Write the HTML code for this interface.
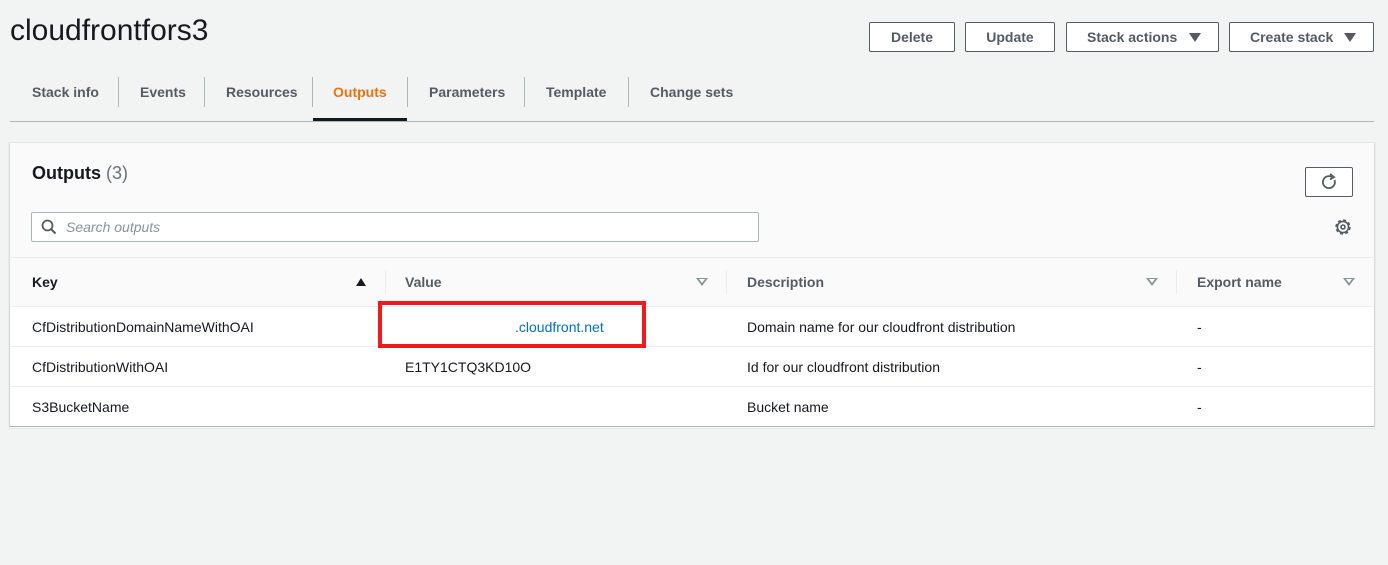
<!DOCTYPE html>
<html><head><style>
*{box-sizing:border-box;margin:0;padding:0}
body{width:1388px;height:565px;background:#f2f3f3;font-family:"Liberation Sans",sans-serif;color:#16191f;position:relative;overflow:hidden;font-size:14px}
.a{position:absolute}
h1{position:absolute;left:10px;top:14px;font-size:30px;font-weight:400;letter-spacing:0px}
.btn{position:absolute;top:22px;height:30px;border:1px solid #545b64;border-radius:2px;background:#fff;font-weight:700;color:#545b64;font-size:14px;line-height:28px;text-align:center}
.tab{position:absolute;top:84px;font-weight:700;color:#545b64;font-size:14px}
.sep{position:absolute;top:77px;width:1px;height:30px;background:#aab7b8}
.th{position:absolute;top:274px;font-weight:700;color:#545b64}
.td{position:absolute;font-size:14px;color:#16191f}
.tri{position:absolute;top:278px;width:0;height:0;border-left:6px solid transparent;border-right:6px solid transparent;border-top:8px solid #879596}
.tri:after{content:"";position:absolute;left:-3px;top:-7px;border-left:3px solid transparent;border-right:3px solid transparent;border-top:4px solid #fff}
.dd{position:absolute;top:10px;border-left:6px solid transparent;border-right:6px solid transparent;border-top:9px solid #545b64}
</style></head><body>
<h1>cloudfrontfors3</h1>
<div class="btn" style="left:869px;width:86px">Delete</div>
<div class="btn" style="left:965px;width:90px">Update</div>
<div class="btn" style="left:1066px;width:153px;text-align:left;padding-left:20px">Stack actions <span class="dd" style="left:122px"></span></div>
<div class="btn" style="left:1229px;width:145px;text-align:left;padding-left:20px">Create stack <span class="dd" style="left:114px"></span></div>

<div class="tab" style="left:32px">Stack info</div>
<div class="sep" style="left:118px"></div>
<div class="tab" style="left:140px">Events</div>
<div class="sep" style="left:204px"></div>
<div class="tab" style="left:226px">Resources</div>
<div class="sep" style="left:312px"></div>
<div class="tab" style="left:333px;color:#ec7211">Outputs</div>
<div class="sep" style="left:407px"></div>
<div class="tab" style="left:429px">Parameters</div>
<div class="sep" style="left:524px"></div>
<div class="tab" style="left:546px">Template</div>
<div class="sep" style="left:628px"></div>
<div class="tab" style="left:650px">Change sets</div>
<div class="a" style="left:10px;top:121px;width:1364px;height:1px;background:#aab7b8"></div>
<div class="a" style="left:313px;top:118px;width:94px;height:3px;background:#16191f"></div>

<div class="a" style="left:10px;top:143px;width:1364px;height:285px;background:#fafafa;box-shadow:1px 0 1px rgba(0,28,36,.15),-1px 0 1px rgba(0,28,36,.15)"></div>
<div class="a" style="left:32px;top:163px;font-size:18px;font-weight:700">Outputs <span style="font-weight:400;color:#687078">(3)</span></div>
<div class="a" style="left:1305px;top:167px;width:48px;height:30px;border:1px solid #545b64;border-radius:2px;background:#fff">
<svg width="46" height="28" viewBox="0 0 46 28"><path d="M28.5 12 A6 6 0 1 1 26 9" fill="none" stroke="#545b64" stroke-width="1.8"/><path d="M24 6 L28 9 L24 11.5" fill="none" stroke="#545b64" stroke-width="1.8"/></svg></div>
<svg class="a" style="left:1334px;top:218px" width="18" height="18" viewBox="0 0 18 18"><circle cx="9" cy="9" r="6.5" fill="none" stroke="#545b64" stroke-width="2.4" stroke-dasharray="2.8 2.3"/><circle cx="9" cy="9" r="5.6" fill="none" stroke="#545b64" stroke-width="1.6"/><circle cx="9" cy="9" r="2" fill="none" stroke="#545b64" stroke-width="1.6"/></svg>
<div class="a" style="left:31px;top:212px;width:728px;height:30px;border:1px solid #aab7b8;border-radius:2px;background:#fff"></div>
<svg class="a" style="left:41px;top:219px" width="16" height="16" viewBox="0 0 16 16"><circle cx="6.5" cy="6.5" r="5" fill="none" stroke="#545b64" stroke-width="1.8"/><path d="M10 10 L14.5 14.5" stroke="#545b64" stroke-width="2"/></svg>
<div class="a" style="left:66px;top:219px;font-style:italic;color:#879596;font-size:14px">Search outputs</div>

<div class="a" style="left:11px;top:257px;width:1362px;height:1px;background:#eaeded"></div>
<div class="a" style="left:11px;top:306px;width:1362px;height:121px;background:#fff"></div>
<div class="a" style="left:11px;top:306px;width:1362px;height:1px;background:#eaeded"></div>
<div class="a" style="left:11px;top:346px;width:1362px;height:1px;background:#eaeded"></div>
<div class="a" style="left:11px;top:386px;width:1362px;height:1px;background:#eaeded"></div>
<div class="a" style="left:10px;top:426px;width:1364px;height:1px;background:#aab7b8"></div>

<div class="th" style="left:32px;color:#16191f">Key</div>
<div class="a" style="left:356px;top:278px;border-left:5px solid transparent;border-right:5px solid transparent;border-bottom:8px solid #16191f"></div>
<div class="sep" style="left:385px;top:270px;height:24px;background:#eaeded"></div>
<div class="th" style="left:405px">Value</div>
<div class="tri" style="left:696px"></div>
<div class="sep" style="left:726px;top:270px;height:24px;background:#eaeded"></div>
<div class="th" style="left:747px">Description</div>
<div class="tri" style="left:1146px"></div>
<div class="sep" style="left:1176px;top:270px;height:24px;background:#eaeded"></div>
<div class="th" style="left:1197px">Export name</div>
<div class="tri" style="left:1343px"></div>

<div class="td" style="left:32px;top:319px">CfDistributionDomainNameWithOAI</div>
<div class="td" style="left:515px;top:319px;color:#0073bb">.cloudfront.net</div>
<div class="a" style="left:378px;top:301px;width:268px;height:47px;border:4px solid #f11a1a"></div>
<div class="td" style="left:747px;top:319px">Domain name for our cloudfront distribution</div>
<div class="td" style="left:1197px;top:319px">-</div>
<div class="td" style="left:32px;top:359px">CfDistributionWithOAI</div>
<div class="td" style="left:405px;top:359px">E1TY1CTQ3KD10O</div>
<div class="td" style="left:747px;top:359px">Id for our cloudfront distribution</div>
<div class="td" style="left:1197px;top:359px">-</div>
<div class="td" style="left:32px;top:399px">S3BucketName</div>
<div class="td" style="left:747px;top:399px">Bucket name</div>
<div class="td" style="left:1197px;top:399px">-</div>
</body></html>
